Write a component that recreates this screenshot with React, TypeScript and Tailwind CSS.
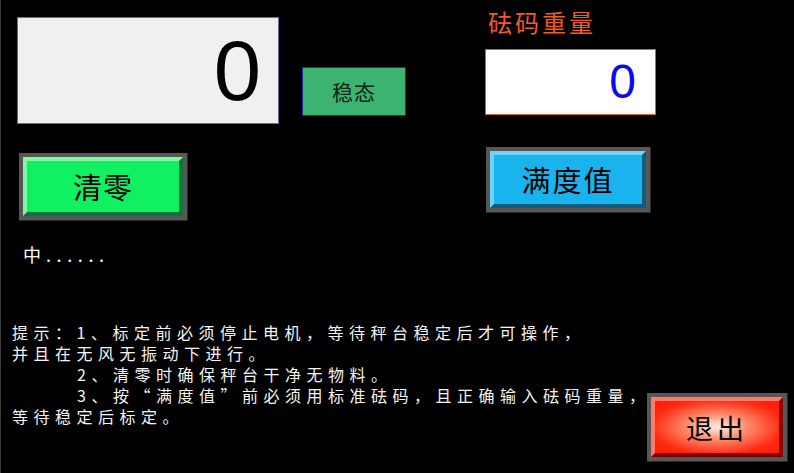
import type React from "react"

const cjk = { fontFamily: '"Noto Sans CJK SC", "Noto Sans", sans-serif' }

interface BevelButtonProps {
  label: string
  fill: string
  className: string
  textClass: string
}

// raised HMI style button: grey frame, light top/left edge, dark bottom/right edge
const BevelButton: React.FC<BevelButtonProps> = ({ label, fill, className, textClass }) => {
  return (
    <div className={`shrink-0 bg-[#585656] p-[4px] border-r-[1px] border-b-[1px] border-[#2a2a2a] ${className}`}>
      <div className={`h-full w-full flex items-center justify-center ${fill}`}>
        <span className={`text-black ${textClass}`} style={cjk}>
          {label}
        </span>
      </div>
    </div>
  )
}

export default function App() {
  return (
    <div className="w-[794px] h-[473px] bg-black border-l border-[#3c3c3c] overflow-hidden" style={cjk}>
      {/* top area */}
      <div className="flex items-start">
        <div className="flex flex-col ml-[16px] mt-[17px]">
          <div className="w-[262px] h-[107px] bg-[#f0f0f0] border border-[#6a6aa8] flex items-center justify-end pr-[17px]">
            <span
              className="text-black text-[85px] leading-none"
              style={{ fontFamily: '"Liberation Sans", Arial, sans-serif' }}
            >
              0
            </span>
          </div>
          <BevelButton
            label="清零"
            className="w-[169px] h-[68px] mt-[29px] ml-[2px]"
            fill="bg-[#10f060] border-[4px] border-t-[#80f7a2] border-l-[#80f7a2] border-r-[#08763a] border-b-[#08763a]"
            textClass="text-[29px] leading-none tracking-[1px]"
          />
        </div>

        <div className="w-[104px] h-[49px] ml-[23px] mt-[67px] bg-[#3cb371] border border-[#1c2ca0] flex items-center justify-center">
          <span className="text-[21px] leading-none tracking-[1px] text-[#0f2414]">稳态</span>
        </div>

        <div className="flex flex-col ml-[79px]">
          <div className="h-[26px] mt-[9px] ml-[3px] text-[24px] leading-[26px] tracking-[3px] text-[#f45a22]">
            砝码重量
          </div>
          <div className="w-[171px] h-[66px] mt-[14px] bg-white border border-[#d0602c] flex items-center justify-end pr-[19px]">
            <span
              className="text-[#0a0af0] text-[48px] leading-none"
              style={{ fontFamily: '"Liberation Sans", Arial, sans-serif' }}
            >
              0
            </span>
          </div>
          <BevelButton
            label="满度值"
            className="w-[165px] h-[66px] mt-[32px] ml-[1px]"
            fill="bg-[#19b4ee] border-[4px] border-t-[#6ad4fa] border-l-[#6ad4fa] border-r-[#0c5c7e] border-b-[#0c5c7e]"
            textClass="text-[29px] leading-none tracking-[2px]"
          />
        </div>
      </div>

      {/* status line */}
      <div className="mt-[21px] ml-[22px] h-[24px] text-[18px] leading-[24px] text-white whitespace-nowrap">
        <span className="tracking-[5px]">中</span>
        <span className="tracking-[5.6px]">......</span>
      </div>

      {/* hints + exit */}
      <div className="flex items-start mt-[56px]">
        <div className="w-[646px] shrink-0 pl-[11px] text-[16px] leading-[21px] tracking-[5.5px] text-[#f4f4f4] whitespace-nowrap">
          <div>提示：1、标定前必须停止电机，等待秤台稳定后才可操作，</div>
          <div>并且在无风无振动下进行。</div>
          <div className="pl-[65px]">2、清零时确保秤台干净无物料。</div>
          <div className="pl-[65px]">3、按“满度值”前必须用标准砝码，且正确输入砝码重量，</div>
          <div>等待稳定后标定。</div>
        </div>
        <BevelButton
          label="退出"
          className="w-[141px] h-[69px] mt-[71px]"
          fill="bg-[radial-gradient(ellipse_at_center,#fff0e8_0%,#ff8a6a_35%,#ff2a12_75%,#ff1808_100%)] border-[4px] border-t-[#ff7a66] border-l-[#ff7a66] border-r-[#8a0a06] border-b-[#7a0000]"
          textClass="text-[27px] leading-none tracking-[4px]"
        />
      </div>
    </div>
  )
}
